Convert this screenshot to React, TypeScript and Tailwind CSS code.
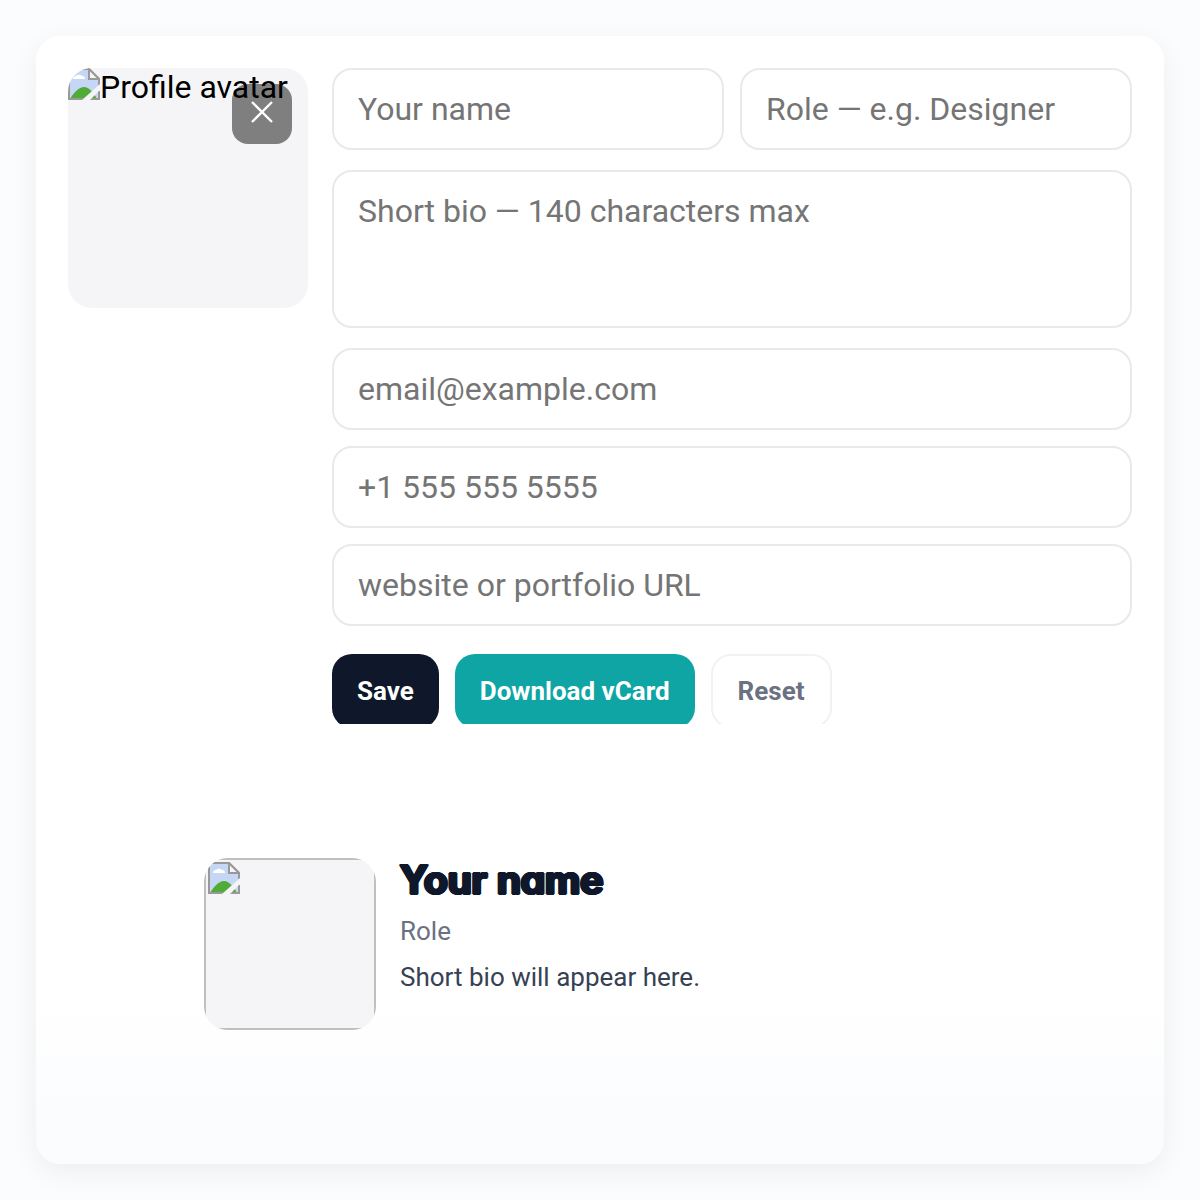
import { useState } from "react";

type FieldProps = {
  id: string;
  label: string;
  placeholder: string;
  type?: string;
};

const fieldClass =
  "block w-full rounded-[20px] border-2 border-[#e8e9ea] bg-transparent px-6 text-[32px] leading-[38px] text-slate-900 outline-none placeholder:text-[#757575] focus:border-teal-500";

function Field({ id, label, placeholder, type = "text" }: FieldProps) {
  return (
    <div className="min-w-0 flex-1">
      <input
        id={id}
        name={id}
        type={type}
        aria-label={label}
        placeholder={placeholder}
        className={`${fieldClass} py-5`}
      />
    </div>
  );
}

function MissingImage() {
  return (
    <svg viewBox="0 0 32 32" className="h-8 w-8 shrink-0" aria-hidden="true">
      <path d="M1 1H21L31 11V31H1Z" fill="#c6d7f5" />
      <path d="M5 11a3 3 0 0 1 3-3a4 4 0 0 1 6 0a3 3 0 0 1 3 3Z" fill="#fff" />
      <path d="M2 31C6 24 11 19 16 19C21 19 26 25 29 31Z" fill="#51ab37" />
      <path d="M1 32V1H21L31 11V17M1 31H15M22 31H31V23" fill="none" stroke="#999" strokeWidth="2" />
      <path d="M21 1L31 11H21Z" fill="#f5f5f7" stroke="#999" strokeWidth="2" />
      <path d="M32 16V22L22 32H14Z" fill="#f5f5f7" />
    </svg>
  );
}

export default function App() {
  const [bio, setBio] = useState("");

  return (
    <div className="flex min-h-screen flex-col bg-[#fbfcfe] p-9 font-[Roboto,sans-serif]">
      <main className="flex flex-1 flex-col rounded-3xl bg-linear-to-b from-white from-85% to-[#fbfcfe] to-97% shadow-[0_8px_28px_rgba(12,12,12,0.06)]">
        <section className="flex items-start gap-6 overflow-hidden px-8 pt-8">
          <div className="relative h-60 w-60 shrink-0 overflow-hidden rounded-3xl bg-[#f5f5f7]">
            <button
              type="button"
              aria-label="Remove avatar"
              className="absolute top-4 right-4 flex h-15 w-15 items-center justify-center rounded-2xl bg-[#7f7f7f] pb-1"
            >
              <svg viewBox="0 0 24 24" className="h-6 w-6" aria-hidden="true">
                <path d="M2 2L22 22M22 2L2 22" stroke="#fff" strokeWidth="2.4" />
              </svg>
            </button>
            <div className="relative flex whitespace-nowrap text-[32px] leading-[38px] text-black">
              <MissingImage />
              <span>Profile avatar</span>
            </div>
          </div>

          <form className="-mb-1 min-w-0 flex-1" onSubmit={(e) => e.preventDefault()}>
            <div className="flex gap-4">
              <Field id="name" label="Name" placeholder="Your name" />
              <Field id="role" label="Role" placeholder="Role — e.g. Designer" />
            </div>

            <textarea
              id="bio"
              name="bio"
              aria-label="Short bio"
              rows={3}
              maxLength={140}
              value={bio}
              onChange={(e) => setBio(e.target.value)}
              placeholder="Short bio — 140 characters max"
              className={`${fieldClass} mt-5 resize-none py-5`}
            />

            <div className="mt-5 flex flex-col gap-4">
              <Field id="email" label="Email" type="email" placeholder="email@example.com" />
              <Field id="phone" label="Phone" type="tel" placeholder="+1 555 555 5555" />
              <Field id="website" label="Website" type="url" placeholder="website or portfolio URL" />
            </div>

            <div className="mt-7 flex gap-4 text-[26px] leading-[34px] font-bold">
              <button type="submit" className="rounded-[20px] bg-[#0f172a] px-[25px] py-5 text-white">
                Save
              </button>
              <button type="button" className="rounded-[20px] bg-[#0ea5a4] px-[25px] py-5 text-white">
                Download vCard
              </button>
              <button
                type="reset"
                onClick={() => setBio("")}
                className="rounded-[20px] border-2 border-[#f1f2f3] px-[25px] py-[18px] text-gray-500"
              >
                Reset
              </button>
            </div>
          </form>
        </section>

        <section className="flex flex-1 items-center justify-center px-8">
          <div className="flex w-full max-w-[792px] items-start gap-6">
            <div className="h-43 w-43 shrink-0 overflow-hidden rounded-3xl bg-[#f5f5f7]">
              <div className="h-full border-2 border-[#bfbfbf] p-0.5">
                <MissingImage />
              </div>
            </div>
            <div>
              <h2 className="font-[Inter,sans-serif] text-[39px] leading-[44px] font-semibold text-[#0f172a] [font-feature-settings:'cv11'] [-webkit-text-stroke:2px_#0f172a] [text-shadow:2px_0_#0f172a,-2px_0_#0f172a,0_1px_#0f172a,0_-1px_#0f172a,1px_1px_#0f172a,-1px_1px_#0f172a,1px_-1px_#0f172a,-1px_-1px_#0f172a]">
                Your name
              </h2>
              <p className="mt-3 text-[26px] leading-[34px] text-gray-500">Role</p>
              <p className="mt-3 text-[26px] leading-[34px] text-gray-700">
                {bio || "Short bio will appear here."}
              </p>
            </div>
          </div>
        </section>
      </main>
    </div>
  );
}
